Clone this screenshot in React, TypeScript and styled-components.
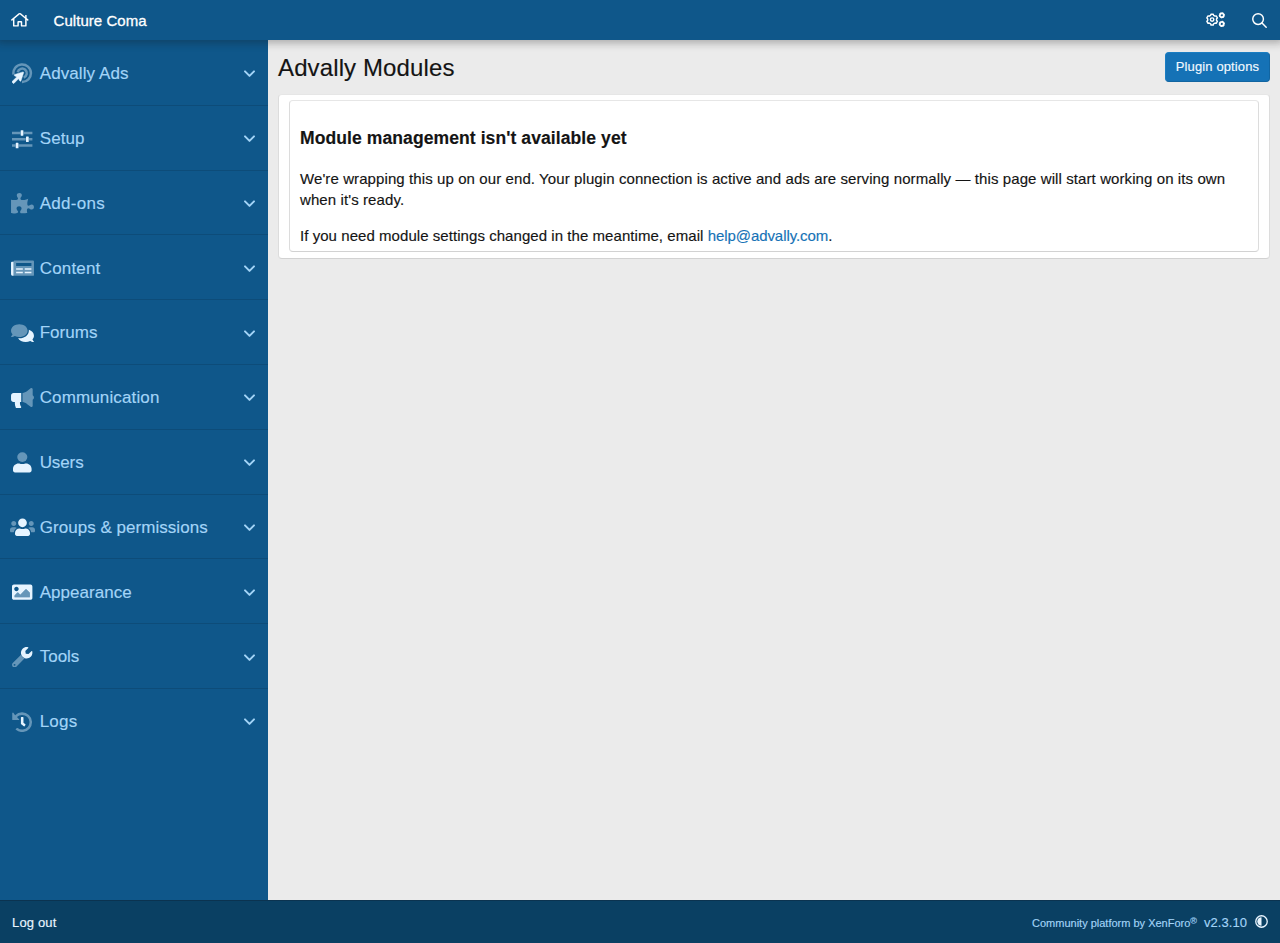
import React from 'react';
import styled, { createGlobalStyle } from 'styled-components';

const GlobalStyle = createGlobalStyle`
  *, *::before, *::after { box-sizing: border-box; }
  body {
    margin: 0;
    font-family: "Helvetica Neue", "Liberation Sans", Arial, sans-serif;
    font-size: 15px;
    line-height: 1.4;
    color: #141414;
    background: #ebebeb;
    -webkit-text-stroke: 0.15px currentColor;
  }
`;

const Page = styled.div`
  display: flex;
  flex-direction: column;
  height: 943px;
  overflow: hidden;
`;

const Header = styled.header`
  display: flex;
  align-items: center;
  flex: none;
  height: 40px;
  padding: 0 13px 0 11px;
  color: #fff;
  background: #0f578a;
  box-shadow: 0 0 8px 3px rgba(20, 20, 20, 0.3);
  z-index: 1;
`;

const SiteTitle = styled.a`
  margin-left: 25px;
  padding-top: 2px;
  font-size: 15px;
  line-height: 20px;
  letter-spacing: 0.04px;
  -webkit-text-stroke: 0.3px #fff;
`;

const HeaderTools = styled.div`
  display: flex;
  align-items: center;
  gap: 27px;
  margin-left: auto;
`;

const Icon = styled.svg<{ $w: number; $h: number }>`
  display: block;
  flex: none;
  width: ${(p) => p.$w}px;
  height: ${(p) => p.$h}px;
  fill: currentColor;
`;

const Body = styled.div`
  display: flex;
  flex: 1;
  min-height: 0;
`;

const Sidebar = styled.nav`
  flex: none;
  width: 268px;
  background: #0f578a;
`;

const NavRow = styled.a`
  display: flex;
  align-items: center;
  height: 64.8px;
  padding: 2px 12px 0 10px;
  border-bottom: 1px solid #0d4c79;
  color: #a3d4f7;
  &:first-child { height: 65.8px; }
  &:last-child { border-bottom-color: transparent; }
`;

const NavIcon = styled.span`
  display: flex;
  justify-content: center;
  flex: none;
  width: 25px;
  margin-right: 4.7px;
  color: #e6f4ff;
`;

const NavLabel = styled.span<{ $track: number }>`
  flex: 1;
  padding-top: 0.5px;
  font-size: 17px;
  line-height: 24px;
  letter-spacing: ${(p) => p.$track}px;
`;

const Content = styled.main`
  flex: 1;
  padding: 11px 10px 0;
`;

const TitleBar = styled.div`
  display: flex;
  justify-content: space-between;
  align-items: flex-start;
  height: 43px;
`;

const PageTitle = styled.h1`
  margin: 0;
  font-size: 24px;
  font-weight: 400;
  line-height: 34px;
  letter-spacing: 0.12px;
`;

const Button = styled.a`
  margin-top: 1px;
  padding: 5px 9px;
  width: 105px;
  height: 30px;
  border: 1px solid;
  border-color: #1a7dc2 #1265a1 #1265a1 #1a7dc2;
  border-radius: 4px;
  background: #1572b6;
  color: #f2f9ff;
  font-size: 13px;
  line-height: 18px;
  letter-spacing: 0.12px;
  text-align: center;
  white-space: nowrap;
`;

const Block = styled.section`
  padding: 5px 10px;
  height: 165px;
  border: 1px solid;
  border-color: #e6e6e6 #dcdcdc #d2d2d2 #dcdcdc;
  border-radius: 4px;
  background: #fff;
`;

const Message = styled.div`
  padding: 0 10px;
  height: 152px;
  border: 1px solid;
  border-color: #e6e6e6 #dcdcdc #d2d2d2 #dcdcdc;
  border-radius: 4px;
`;

const MessageTitle = styled.h3`
  margin: 25px 0 17px;
  font-size: 17.55px;
  line-height: 25px;
  letter-spacing: 0.08px;
`;

const Paragraph = styled.p<{ $track: number }>`
  margin: 0 0 15px;
  line-height: 21px;
  letter-spacing: ${(p) => p.$track}px;
`;

const Link = styled.a`
  color: #1572b6;
  letter-spacing: -0.07px;
`;

const Footer = styled.footer`
  display: flex;
  align-items: center;
  flex: none;
  height: 43px;
  padding: 2px 12px 0;
  border-top: 1px solid #0b3350;
  background: #0a4063;
  color: #a3d4f7;
  font-size: 13px;
`;

const LogOut = styled.a`
  margin-right: auto;
  letter-spacing: 0.15px;
  color: #e9f5ff;
`;

const Copyright = styled.span`
  font-size: 11px;
  margin-right: 7px;
  padding-top: 1px;
  sup { font-size: 9px; line-height: 0; vertical-align: 3.5px; }
`;

const Version = styled.span`
  margin-right: 8px;
  letter-spacing: 0.05px;
`;

const StyleToggle = styled.span`
  padding-bottom: 3px;
`;

const FADE = 0.4;

const icons = {
  ads: (
    <Icon viewBox="0 0 512 512" $w={20.4} $h={20.4}>
      <g fill="none" stroke="currentColor" strokeWidth="62" opacity={FADE}>
        <path d="M38 290A220 220 0 1 1 250 476" />
        <path d="M143 232A116 116 0 1 1 294 366" />
      </g>
      <path d="M275 224L70 288c-20 7-20 25-3 34l52 28-112 110c-9 9-9 20 0 29l18 18c9 9 20 9 29 0l110-112 28 52c9 17 27 17 34-3l66-202c4-12-5-22-17-18z" stroke="currentColor" strokeWidth="12" />
    </Icon>
  ),
  setup: (
    <Icon viewBox="0 0 512 512" $w={20.4} $h={20.4}>
      <path opacity={FADE} d="M0 72h212v58H0zm292 0h220v58H292zM0 229h346v58H0zm426 0h86v58h-86zM0 386h90v58H0zm166 0h346v58H166z" />
      <path d="M228 30h48q10 0 10 10v120q0 10-10 10h-48q-10 0-10-10V40q0-10 10-10zm134 158h48q10 0 10 10v120q0 10-10 10h-48q-10 0-10-10V198q0-10 10-10zM104 348h48q10 0 10 10v116q0 10-10 10h-48q-10 0-10-10V358q0-10 10-10z" />
    </Icon>
  ),
  addons: (
    <Icon viewBox="0 0 576 512" $w={23} $h={20.4}>
      <path opacity={FADE} d="M519.442 288.651c-41.519 0-59.5 31.593-82.058 31.593C377.409 320.244 432 144 432 144s-196.288 80-196.288-3.297c0-35.827 36.288-46.25 36.288-85.985C272 19.216 243.885 0 210.539 0c-34.654 0-66.366 18.891-66.366 56.346 0 41.364 31.711 59.277 31.711 81.75C175.885 207.719 0 166.758 0 166.758v333.237s178.635 41.047 178.635-28.662c0-22.473-40-40.107-40-81.471 0-37.456 29.25-56.346 63.577-56.346 33.673 0 61.788 19.216 61.788 54.717 0 39.735-36.288 50.158-36.288 85.985 0 60.803 129.675 25.73 181.23 25.73 0 0-34.725-120.101 25.827-120.101 35.962 0 46.423 36.152 86.308 36.152C556.712 416 576 387.99 576 354.443c0-34.199-18.962-65.792-56.558-65.792z" />
    </Icon>
  ),
  content: (
    <Icon viewBox="0 0 576 512" $w={23} $h={20.4}>
      <path opacity={FADE} fillRule="evenodd" d="M88 64h464q24 0 24 24v336q0 24-24 24H64V88q0-24 24-24zm40 64v72h384v-72z" />
      <path d="M64 96v352C18 448 0 430 0 400V120q0-24 24-24zM128 256h168v36H128zm216 0h168v36H344zM128 348h168v36H128zm216 0h168v36H344z" />
    </Icon>
  ),
  forums: (
    <Icon viewBox="0 0 576 512" $w={23} $h={20.4}>
      <path opacity={FADE} d="M416 192c0-88.4-93.1-160-208-160S0 103.6 0 192c0 34.3 14.1 65.9 38 92-13.4 30.2-35.5 54.2-35.8 54.5-2.2 2.3-2.8 5.7-1.5 8.7S4.8 352 8 352c36.6 0 66.9-12.3 88.7-25 32.2 15.7 70.3 25 111.3 25 114.9 0 208-71.6 208-160z" />
      <path d="M538 412c23.9-26 38-57.7 38-92 0-66.9-53.5-124.2-129.3-148.1.9 6.6 1.3 13.3 1.3 20.1 0 105.9-107.7 192-240 192-10.8 0-21.3-.8-31.7-1.9C207.8 439.6 281.8 480 368 480c41 0 79.1-9.2 111.3-25 21.8 12.7 52.1 25 88.7 25 3.2 0 6.1-1.9 7.3-4.8 1.3-2.9.7-6.3-1.5-8.7-.3-.3-22.4-24.2-35.8-54.5z" />
    </Icon>
  ),
  communication: (
    <Icon viewBox="0 0 576 512" $w={23} $h={20.4}>
      <path opacity={FADE} d="M544 184.9V32c0-9-7-32-32-32-7 0-14 2.4-20 7l-85 68c-34 27-76 45-119 51v228c43 6 85 24 119 51l85 68c6 5 13 7 20 7 25 0 32-23 32-32V295c19-11 32-31 32-55s-13-44-32-55.1z" />
      <path d="M256 128H64c-35.35 0-64 28.65-64 64v96c0 35.35 28.65 64 64 64h33.7c-1.39 10.48-2.18 21.14-2.18 32 0 39.77 9.26 77.35 25.56 110.94 5.19 10.69 16.52 17.06 28.4 17.06h74.28c26.05 0 41.69-29.84 25.9-50.56-16.4-21.52-26.15-48.36-26.15-77.44 0-11.11 1.62-21.79 4.41-32H256z" />
    </Icon>
  ),
  users: (
    <Icon viewBox="0 0 448 512" preserveAspectRatio="none" $w={18.6} $h={20.4}>
      <circle opacity={FADE} cx="224" cy="128" r="122" />
      <path d="M313.6 288h-16.7c-22.2 10.2-46.9 16-72.9 16s-50.6-5.8-72.9-16h-16.7C60.2 288 0 348.2 0 422.4V464c0 26.5 21.5 48 48 48h352c26.5 0 48-21.5 48-48v-41.6c0-74.2-60.2-134.4-134.4-134.4z" />
    </Icon>
  ),
  groups: (
    <Icon viewBox="0 0 640 512" $w={25} $h={20.4}>
      <path opacity={FADE} d="M96 224c35.3 0 64-28.7 64-64s-28.7-64-64-64-64 28.7-64 64 28.7 64 64 64zm448 0c35.3 0 64-28.7 64-64s-28.7-64-64-64-64 28.7-64 64 28.7 64 64 64zm32 32h-64c-17.6 0-33.5 7.1-45.1 18.6 40.3 22.1 68.9 62 75.1 109.4h66c17.7 0 32-14.3 32-32v-32c0-35.3-28.7-64-64-64zM173.1 274.6C161.5 263.1 145.6 256 128 256H64c-35.3 0-64 28.7-64 64v32c0 17.7 14.3 32 32 32h65.9c6.3-47.4 34.9-87.3 75.2-109.4z" />
      <path d="M320 256c61.9 0 112-50.1 112-112S381.9 32 320 32 208 82.1 208 144s50.1 112 112 112zm76.8 32h-8.3c-20.8 10-43.9 16-68.5 16s-47.6-6-68.5-16h-8.3C179.6 288 128 339.6 128 403.2V432c0 26.5 21.5 48 48 48h288c26.5 0 48-21.5 48-48v-28.8c0-63.6-51.6-115.2-115.2-115.2z" />
    </Icon>
  ),
  appearance: (
    <Icon viewBox="0 0 512 512" $w={20.4} $h={20.4}>
      <path opacity={FADE} d="M64 384h384V272l-87.515-87.515c-4.686-4.686-12.284-4.686-16.971 0L208 320l-55.515-55.515c-4.686-4.686-12.284-4.686-16.971 0L64 336v48z" />
      <path d="M464 448H48c-26.51 0-48-21.49-48-48V112c0-26.51 21.49-48 48-48h416c26.51 0 48 21.49 48 48v288c0 26.51-21.49 48-48 48zM112 120c-30.928 0-56 25.072-56 56s25.072 56 56 56 56-25.072 56-56-25.072-56-56-56zM64 384h384V272l-87.515-87.515c-4.686-4.686-12.284-4.686-16.971 0L208 320l-55.515-55.515c-4.686-4.686-12.284-4.686-16.971 0L64 336v48z" />
    </Icon>
  ),
  tools: (
    <Icon viewBox="0 0 512 512" $w={20.4} $h={20.4}>
      <path opacity={FADE} fillRule="evenodd" d="M227 194L18.74 402.76c-24.99 24.99-24.99 65.51 0 90.5s65.51 24.99 90.5 0L318 284c-43-14-77-47-91-90zM64 472a24 24 0 1 1 0-48 24 24 0 0 1 0 48z" />
      <path d="M507.73 109.1c-2.24-9.03-13.54-12.09-20.12-5.51l-74.36 74.36-67.88-11.31-11.31-67.88 74.36-74.36c6.62-6.62 3.43-17.9-5.66-20.16-47.38-11.74-99.55.91-136.58 37.93-39.64 39.64-50.55 97.1-34.05 147.2 12 42 49 78 90.32 90.68 50.12 16.71 107.47 5.68 147.37-34.22 37.07-37.07 49.7-89.32 37.91-136.73z" />
    </Icon>
  ),
  logs: (
    <Icon viewBox="0 0 512 512" $w={20.4} $h={20.4}>
      <path opacity={FADE} d="M14 20Q24 10 34 20L78 82A248 248 0 1 1 97 447q-10-9 0-18l26-26q9-8 18-1A184 184 0 1 0 124 128l54 54q8 16-8 22H18q-12 0-12-12V32Q6 24 14 20z" />
      <path d="M236 128h40q12 0 12 12v132l47 37q10 8 3 18l-24 31q-8 10-18 2l-72-57V140q0-12 12-12z" />
    </Icon>
  ),
};

const sections: { icon: keyof typeof icons; label: string; track: number }[] = [
  { icon: 'ads', label: 'Advally Ads', track: 0.1 },
  { icon: 'setup', label: 'Setup', track: 0.1 },
  { icon: 'addons', label: 'Add-ons', track: 0.3 },
  { icon: 'content', label: 'Content', track: 0.17 },
  { icon: 'forums', label: 'Forums', track: 0.02 },
  { icon: 'communication', label: 'Communication', track: 0.13 },
  { icon: 'users', label: 'Users', track: -0.1 },
  { icon: 'groups', label: 'Groups & permissions', track: 0.04 },
  { icon: 'appearance', label: 'Appearance', track: 0.03 },
  { icon: 'tools', label: 'Tools', track: 0 },
  { icon: 'logs', label: 'Logs', track: 0.2 },
];

const Chevron = () => (
  <Icon viewBox="0 0 13 13" $w={13} $h={13}>
    <path d="M2 4.4L6.5 8.900 11 4.4" fill="none" stroke="currentColor" strokeWidth="2" strokeLinecap="round" strokeLinejoin="round" />
  </Icon>
);

const HomeIcon = () => (
  <Icon viewBox="0 0 576 512" $w={17.6} $h={15.6}>
    <path d="M570.24 247.41L512 199.52V104a8 8 0 0 0-8-8h-32a8 8 0 0 0-7.95 7.88v56.22L323.87 45a56.06 56.06 0 0 0-71.74 0L5.76 247.41a16 16 0 0 0-2 22.54L14 282.25a16 16 0 0 0 22.53 2L64 261.69V448a32.09 32.09 0 0 0 32 32h128a32.09 32.09 0 0 0 32-32V344h64v104a32.09 32.09 0 0 0 32 32h128a32.07 32.07 0 0 0 32-31.76V261.67l27.53 22.62a16 16 0 0 0 22.53-2L572.29 270a16 16 0 0 0-2.05-22.59zM463.85 432H368V328a32.09 32.09 0 0 0-32-32h-96a32.09 32.09 0 0 0-32 32v104h-96V222.27L288 77.65l176 144.56z" />
  </Icon>
);

const gear = (cx: number, cy: number, r: number, depth: number, teeth: number, phase = 0) => {
  const step = (Math.PI * 2) / teeth;
  const at = (a: number, rad: number) =>
    `${(cx + Math.cos(a) * rad).toFixed(1)} ${(cy + Math.sin(a) * rad).toFixed(1)}`;
  const points: string[] = [];
  for (let i = 0; i < teeth; i++) {
    const a = i * step + phase;
    points.push(at(a - step * 0.32, r - depth), at(a - step * 0.2, r), at(a + step * 0.2, r), at(a + step * 0.32, r - depth));
  }
  return `M${points.join('L')}z`;
};

const CogsIcon = () => (
  <Icon viewBox="0 0 640 512" $w={19} $h={15.2}>
    <g fill="none" stroke="currentColor" strokeWidth="48" strokeLinejoin="round">
      <path d={gear(206, 256, 186, 34, 6, Math.PI / 6)} />
      <circle cx="206" cy="256" r="58" />
      <path d={gear(534, 110, 76, 12, 6, Math.PI / 4)} strokeWidth="58" />
      <path d={gear(534, 402, 76, 12, 6, Math.PI / 4)} strokeWidth="58" />
    </g>
  </Icon>
);

const SearchIcon = () => (
  <Icon viewBox="0 0 512 512" $w={15} $h={15}>
    <g fill="none" stroke="currentColor" strokeWidth="50" strokeLinecap="round">
      <circle cx="208" cy="208" r="182" />
      <path d="M342 342L484 484" />
    </g>
  </Icon>
);

const ContrastIcon = () => (
  <Icon viewBox="0 0 512 512" $w={13} $h={13}>
    <circle cx="256" cy="256" r="226" fill="none" stroke="#e9f5ff" strokeWidth="52" />
    <path d="M256 90v332a166 166 0 0 1 0-332z" fill="#e9f5ff" />
  </Icon>
);

export default function App() {
  return (
    <>
      <GlobalStyle />
      <Page>
        <Header>
          <HomeIcon />
          <SiteTitle>Culture Coma</SiteTitle>
          <HeaderTools>
            <CogsIcon />
            <SearchIcon />
          </HeaderTools>
        </Header>
        <Body>
          <Sidebar>
            {sections.map((s) => (
              <NavRow key={s.label}>
                <NavIcon>{icons[s.icon]}</NavIcon>
                <NavLabel $track={s.track}>{s.label}</NavLabel>
                <Chevron />
              </NavRow>
            ))}
          </Sidebar>
          <Content>
            <TitleBar>
              <PageTitle>Advally Modules</PageTitle>
              <Button>Plugin options</Button>
            </TitleBar>
            <Block>
              <Message>
                <MessageTitle>Module management isn't available yet</MessageTitle>
                <Paragraph $track={0.094}>
                  We're wrapping this up on our end. Your plugin connection is active and ads are serving normally — this page will start working on its own when it's ready.
                </Paragraph>
                <Paragraph $track={0.055}>
                  If you need module settings changed in the meantime, email <Link>help@advally.com</Link>.
                </Paragraph>
              </Message>
            </Block>
          </Content>
        </Body>
        <Footer>
          <LogOut>Log out</LogOut>
          <Copyright>Community platform by XenForo<sup>®</sup></Copyright>
          <Version>v2.3.10</Version>
          <StyleToggle>
            <ContrastIcon />
          </StyleToggle>
        </Footer>
      </Page>
    </>
  );
}
